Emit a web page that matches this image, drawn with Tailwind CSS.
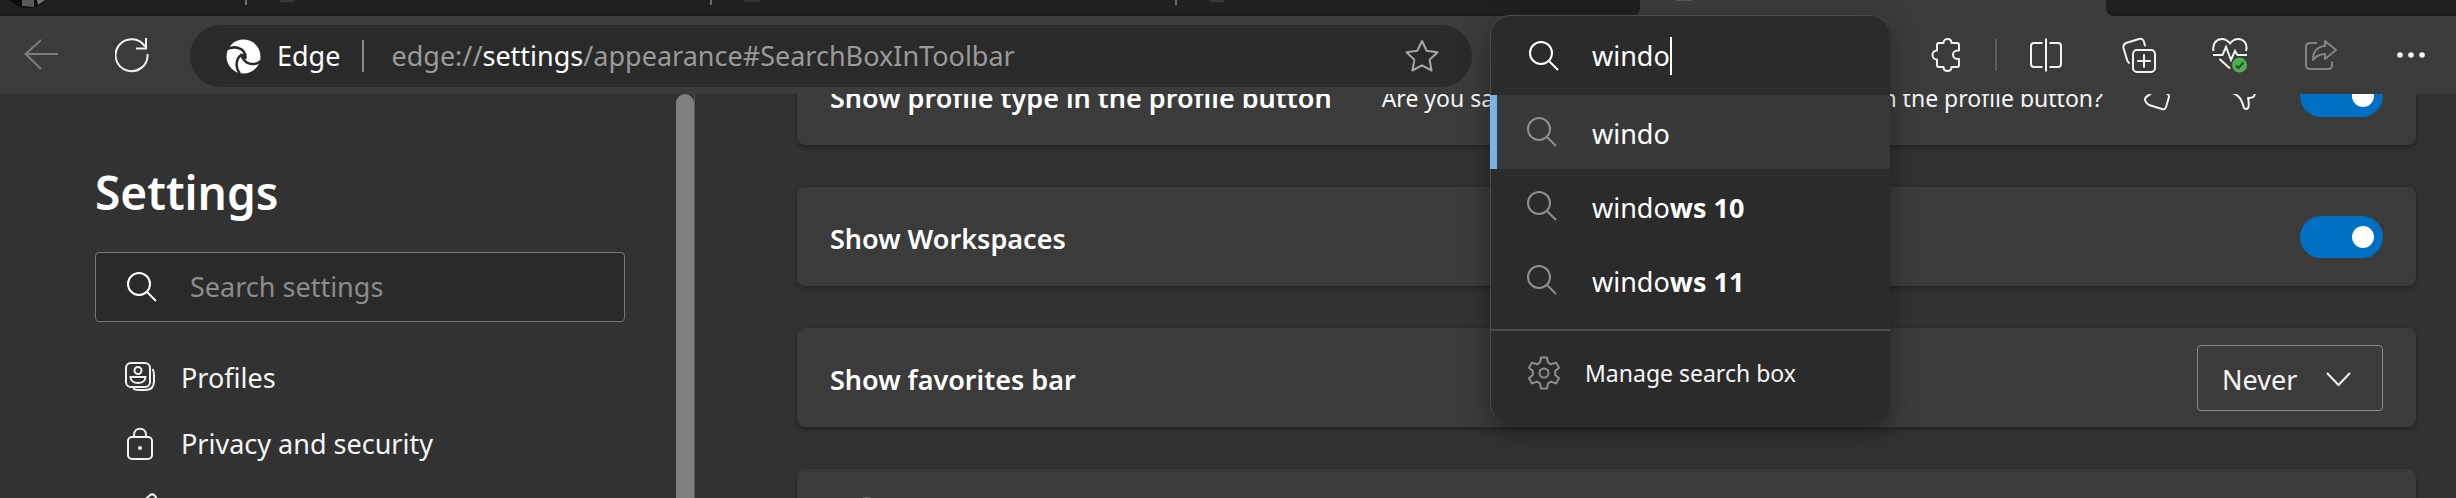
<!DOCTYPE html>
<html lang="en">
<head>
  <meta charset="UTF-8" />
  <meta name="viewport" content="width=device-width, initial-scale=1.0"/>
  <title>Settings</title>
  <script src="https://cdn.jsdelivr.net/npm/@tailwindcss/browser@4"></script>
</head>
<body class="h-screen overflow-hidden flex flex-col bg-[#323232] text-[#f5f5f5] text-[27px] leading-9 font-['Noto_Sans',sans-serif]">

  <!-- tab strip -->
  <div class="flex h-4 shrink-0 bg-[#3b3b3b]">
    <div class="flex items-start flex-[1640] bg-[#202020] rounded-br-lg border-b border-[#1a1a1a]">
      <div class="flex-1 flex justify-between items-start">
        <svg class="ml-2.5" width="36" height="8" viewBox="0 0 36 8"><path d="M0 0h36c-4 5-11 8-18 8S4 5 0 0z" fill="#0c0c0c"/><path d="M12 0h12v7l-12-1z" fill="#5a5a5a"/><path d="M27 0h8l-7 5z" fill="#777"/></svg>
        <span class="w-0.5 h-[5px] bg-[#6a6a6a]"></span>
      </div>
      <div class="w-[465px] pl-8 flex justify-between"><span class="w-4 h-0.5 rounded-b-full bg-[#383838]"></span><span class="w-0.5 h-[5px] bg-[#6a6a6a]"></span></div>
      <div class="w-[465px] pl-8 flex justify-between"><span class="w-4 h-0.5 rounded-b-full bg-[#383838]"></span><span class="w-0.5 h-[5px] bg-[#6a6a6a]"></span></div>
      <div class="w-[463px] pl-8"><span class="block w-4 h-0.5 rounded-b-full bg-[#383838]"></span></div>
    </div>
    <div class="flex-[466]"><span class="block w-4 h-px ml-9 bg-[#555]"></span></div>
    <div class="flex-[350] bg-[#202020] rounded-bl-lg border-b border-[#1a1a1a]"></div>
  </div>

  <!-- toolbar -->
  <header class="relative z-10 flex items-center h-[78px] shrink-0 bg-[#3b3b3b] pl-6 pr-[30px]">
    <button aria-label="Back" class="mr-[57px]">
      <svg width="34" height="34" viewBox="0 0 34 34" fill="none" stroke="#7d7d7d" stroke-width="2"><path d="M34 16H1M17 2 1.500 16 17 31"/></svg>
    </button>
    <button aria-label="Refresh" class="mr-[41px]">
      <svg width="34" height="36" viewBox="0 0 34 36" fill="none" stroke="#f2f2f2" stroke-width="2"><path d="M32.500 17A16 16 0 1 1 30 9.500"/><path d="M31 1v10.500H21"/></svg>
    </button>

    <div class="flex-1 flex items-center h-[62px] mt-0.5 rounded-full bg-[#2a2a2a] pl-9 pr-[33px]">
      <svg class="mr-4" width="35" height="35" viewBox="0 0 35 35"><circle cx="17.500" cy="17.500" r="17" fill="#fff"/><path d="M14 14.500 19.500 15l1 5.500-4.500-1z" fill="#2a2a2a"/><g fill="none" stroke="#2a2a2a" stroke-width="2.500"><path d="M0 10.500C9 6 20 9 19.500 19"/><path d="M14 35C8 27 11 19 15 16"/><path d="M35 22C29 27 20 26 16 18"/></g></svg>
      <span class="text-white">Edge</span>
      <span class="w-0.5 h-8 bg-[#8a8a8a] ml-[22px] mr-[27px]"></span>
      <a href="#" class="flex-1 text-[#9a9a9a]">edge://<span class="text-white">settings</span>/appearance#SearchBoxInToolbar</a>
      <button aria-label="Add to favorites">
        <svg width="34" height="34" viewBox="0 0 34 34" fill="none" stroke="#a5a5a5" stroke-width="2" stroke-linejoin="round"><path d="M17 2l4.700 9.800 10.800 1.500-7.900 7.500 2 10.700L17 26.300 7.400 31.500l2-10.700-7.900-7.500 10.800-1.500z"/></svg>
      </button>
    </div>

    <!-- search box with its suggestion list -->
    <div class="relative w-[400px] h-full ml-[18px] mr-[41px]">
      <div class="absolute -top-px inset-x-0 rounded-[20px] bg-[#2b2b2b] border-t border-l border-[#4a4a4a] shadow-[0_10px_26px_rgba(0,0,0,0.35)]">
        <div class="flex items-center h-[79px] pl-[37px]">
          <svg class="mr-8" width="32" height="32" viewBox="0 0 32 32" fill="none" stroke="#fff" stroke-width="2"><circle cx="13" cy="13" r="11"/><path d="m21 21 9 9"/></svg>
          <input type="text" value="windo" aria-label="Search" class="field-sizing-content bg-transparent text-white outline-none" />
          <span class="w-0.5 h-[38px] bg-white"></span>
        </div>
        <ul>
          <li class="bg-[#383838] border-l-[7px] border-[#76b5e6] -ml-px">
            <a href="#" class="flex items-center h-[74px] pl-[29px] text-white">
              <svg class="mr-[34px]" width="32" height="32" viewBox="0 0 32 32" fill="none" stroke="#8f8f8f" stroke-width="2"><circle cx="13" cy="13" r="11"/><path d="m21 21 9 9"/></svg>
              <span class="pt-1">windo</span>
            </a>
          </li>
          <li>
            <a href="#" class="flex items-center h-[74px] pl-[35px] text-white">
              <svg class="mr-[34px]" width="32" height="32" viewBox="0 0 32 32" fill="none" stroke="#8f8f8f" stroke-width="2"><circle cx="13" cy="13" r="11"/><path d="m21 21 9 9"/></svg>
              <span class="pt-1">windo<b>ws 10</b></span>
            </a>
          </li>
          <li>
            <a href="#" class="flex items-center h-[74px] pl-[35px] text-white">
              <svg class="mr-[34px]" width="32" height="32" viewBox="0 0 32 32" fill="none" stroke="#8f8f8f" stroke-width="2"><circle cx="13" cy="13" r="11"/><path d="m21 21 9 9"/></svg>
              <span class="pt-1">windo<b>ws 11</b></span>
            </a>
          </li>
        </ul>
        <a href="#" class="flex items-center h-[94px] pb-2 mt-3 border-t-2 border-[#4d4d4d] pl-[37px] text-[23px] text-[#f5f5f5]">
          <svg class="mr-[25px]" width="32" height="34" viewBox="0 0 32 34" fill="none" stroke="#8f8f8f" stroke-width="2" stroke-linejoin="round"><circle cx="16" cy="17" r="4.500"/><path d="M13 1.500h6l1 5 3 1.800 5-1.700 3 5.100-3.800 3.400v3.800l3.800 3.400-3 5.100-5-1.700-3 1.800-1 5h-6l-1-5-3-1.800-5 1.700-3-5.100 3.800-3.400v-3.800L1 11.700l3-5.100 5 1.700 3-1.800z"/></svg>
          Manage search box
        </a>
      </div>
    </div>

    <div class="flex items-center">
      <button aria-label="Extensions">
        <svg width="32" height="34" viewBox="0 0 32 34" fill="none" stroke="#f2f2f2" stroke-width="2" stroke-linejoin="round"><path d="M7 5h5.500c0-5.300 8-5.300 8 0H26q2 0 2 2v5.500h-1.500c-6 0-6 8.500 0 8.500H28V27q0 2-2 2h-5.500c0 5.300-8 5.300-8 0H8q-2 0-2-2v-5.500c-6 0-6-9 0-9V7q0-2 2-2z"/></svg>
      </button>
      <span class="w-0.5 h-8 bg-[#5c5c5c] mx-8"></span>
      <button aria-label="Split screen" class="mr-[59px]">
        <svg width="34" height="34" viewBox="0 0 34 34" fill="none" stroke="#f2f2f2" stroke-width="2"><path d="M13.500 5H5Q2 5 2 8v18q0 3 3 3h8.500M20.500 5H29q3 0 3 3v18q0 3-3 3h-8.500M17 0.500v33"/></svg>
      </button>
      <button aria-label="Collections" class="mr-[56px]">
        <svg width="34" height="36" viewBox="0 0 34 36" fill="none" stroke="#f2f2f2" stroke-width="2" stroke-linecap="round"><rect x="11" y="13" width="22" height="22" rx="4"/><path d="M22 18v12M16 24h12M7 26C5.500 25 5 23 4.500 21L1.500 11Q1 7.500 4 6L17 2q4-1 5 3l1 3.500"/></svg>
      </button>
      <button aria-label="Browser essentials" class="mr-[56px]">
        <svg width="36" height="36" viewBox="0 0 36 36" fill="none" stroke="#f2f2f2" stroke-width="2"><path d="M1.500 14C0 6 5 2 10 2c4 0 6 2 8 4.500C20 4 22 2 26 2c6 0 10 5 8 12M1 18h9.500l3.500-8 5 13 4-9 2.500 4H35M7.500 22 18 31.500"/><circle cx="27.500" cy="28" r="7.500" fill="#4fae50" stroke="none"/><path d="m24 28.500 2.500 2.500 5-5.500" stroke="#24502a"/></svg>
      </button>
      <button aria-label="Share" class="mr-[58px]">
        <svg width="34" height="32" viewBox="0 0 34 32" fill="none" stroke="#858585" stroke-width="2" stroke-linejoin="round"><path d="M13 4H6Q2 4 2 8v18q0 4 4 4h18q4 0 4-4v-3.500"/><path d="M21 2l11 9-11 9v-5c-6 0-9 2-12 6 0-8 4-13.500 12-14z"/></svg>
      </button>
      <button aria-label="More">
        <svg width="30" height="8" viewBox="0 0 30 8" fill="#f7f7f7"><circle cx="4" cy="4" r="2.800"/><circle cx="15" cy="4" r="2.800"/><circle cx="26" cy="4" r="2.800"/></svg>
      </button>
    </div>
  </header>

  <div class="flex flex-1 min-h-0">
    <!-- sidebar -->
    <aside class="flex shrink-0 w-[695px] border-r border-[#555]">
      <div class="flex-1 pl-[95px] pr-[51px] pt-[68px] overflow-hidden">
        <h1 class="text-[46px] leading-[60px] font-semibold text-white">Settings</h1>
        <label class="flex items-center h-[70px] mt-[30px] border border-[#757575] rounded bg-[#2a2a2a] pl-[30px]">
          <svg class="mr-8" width="32" height="32" viewBox="0 0 32 32" fill="none" stroke="#fff" stroke-width="2"><circle cx="13" cy="13" r="11"/><path d="m21 21 9 9"/></svg>
          <input type="text" placeholder="Search settings" aria-label="Search settings" class="flex-1 bg-transparent outline-none placeholder:text-[#8c8c8c]" />
        </label>
        <nav class="mt-[23px] pl-[30px]">
          <a href="#" class="flex items-center h-[66px]">
            <svg class="mr-[26px]" width="30" height="32" viewBox="0 0 30 32" fill="none" stroke="#f2f2f2" stroke-width="2"><rect x="1" y="1" width="24" height="24" rx="5"/><circle cx="13" cy="8.500" r="3.500"/><path d="M5.500 15h15c0 8-15 8-15 0zM27.500 7c1.500 2 1.500 4 1.500 6v6q0 9-9 9h-6q-4 0-6-1.500"/></svg>
            <span>Profiles</span>
          </a>
          <a href="#" class="flex items-center h-[66px]">
            <svg class="mr-[26px]" width="30" height="34" viewBox="0 0 30 34" fill="none" stroke="#f2f2f2" stroke-width="2"><rect x="3" y="10" width="24" height="22" rx="4"/><path d="M9 10V8c0-8.500 12-8.500 12 0v2"/><circle cx="15" cy="21" r="2" fill="#f2f2f2" stroke="none"/></svg>
            <span>Privacy and security</span>
          </a>
          <a href="#" class="flex items-center h-[66px]" aria-label="Appearance">
            <svg width="34" height="34" viewBox="0 0 34 34" fill="none" stroke="#f2f2f2" stroke-width="2"><path d="M12 14 24 3c4-4 9 1 6 5L19 20q-1-5-7-6zM12 14c-5 0-8 3-8 8 0 4-1 6-3 8 8 2 17 0 18-10"/></svg>
          </a>
        </nav>
      </div>
      <div class="w-[18px] rounded-t-full bg-[#7f7f7f]"></div>
    </aside>

    <!-- settings cards -->
    <main class="flex-1 flex flex-col gap-[42px] -mt-12 pl-[102px] pr-10 overflow-hidden">
      <section class="flex items-center h-[99px] shrink-0 px-[33px] rounded-lg bg-[#3b3b3b] shadow-[0_2px_5px_rgba(0,0,0,0.35)]">
        <label for="profile-type" class="pt-1 font-semibold text-white whitespace-nowrap">Show profile type in the profile button</label>
        <p class="flex-1 flex justify-between pt-1 ml-[50px] mr-[40px] text-[23px] whitespace-nowrap"><span>Are you satisfied with</span><span>showing the type in the profile button?</span></p>
        <button aria-label="Like" class="mr-[59px]">
          <svg width="28" height="34" viewBox="0 0 28 34" fill="none" stroke="#f2f2f2" stroke-width="2" stroke-linejoin="round"><path d="M6 16c4-2 6-6 7-14 5-1 7 3 5 12h4q4 0 4 4l-3 10q-1 3-4 2L6 26q-8-6 0-10z"/></svg>
        </button>
        <button aria-label="Dislike" class="mr-[42px]">
          <svg width="28" height="34" viewBox="0 0 28 34" fill="none" stroke="#f2f2f2" stroke-width="2" stroke-linejoin="round"><path d="M2 14c8 2 10 8 12 15 4 3 6-1 4-10 6 0 7-2 7-6L22 3 7 2Q2 6 2 14z"/></svg>
        </button>
        <input id="profile-type" type="checkbox" checked class="appearance-none flex items-center justify-end w-[83px] h-[42px] pr-[9px] rounded-full bg-[#0070c4] before:content-[''] before:size-[22px] before:rounded-full before:bg-white" />
      </section>

      <section class="flex items-center justify-between h-[99px] shrink-0 px-[33px] rounded-lg bg-[#3b3b3b] shadow-[0_2px_5px_rgba(0,0,0,0.35)]">
        <label for="workspaces" class="pt-1 font-semibold text-white">Show Workspaces</label>
        <input id="workspaces" type="checkbox" checked class="appearance-none flex items-center justify-end w-[83px] h-[42px] pr-[9px] rounded-full bg-[#0070c4] before:content-[''] before:size-[22px] before:rounded-full before:bg-white" />
      </section>

      <section class="flex items-center justify-between h-[99px] shrink-0 px-[33px] rounded-lg bg-[#3b3b3b] shadow-[0_2px_5px_rgba(0,0,0,0.35)]">
        <label for="favorites-bar" class="pt-1 font-semibold text-white">Show favorites bar</label>
        <div class="relative">
          <select id="favorites-bar" class="appearance-none block w-[186px] h-[66px] pl-6 pt-1 border border-[#8a8a8a] rounded bg-transparent">
            <option>Never</option>
            <option>Always</option>
          </select>
          <svg class="absolute right-8 top-[26px] pointer-events-none" width="25" height="18" viewBox="0 0 25 18" fill="none" stroke="#f2f2f2" stroke-width="2"><path d="M1 2l11.500 12L24 2"/></svg>
        </div>
      </section>

      <section class="h-[99px] shrink-0 px-[60px] pt-[28px] rounded-lg bg-[#3b3b3b] shadow-[0_2px_5px_rgba(0,0,0,0.35)]">
        <span class="block size-5 rounded-full bg-[#777]"></span>
      </section>
    </main>
  </div>
</body>
</html>
